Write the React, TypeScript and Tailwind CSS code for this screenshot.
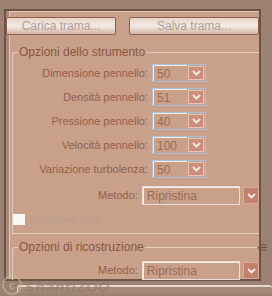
import React from "react";

function Chevron() {
  return (
    <svg width="9" height="6" viewBox="0 0 9 6">
      <path d="M1 1 L4.5 4.5 L8 1" fill="none" stroke="#f6ece6" strokeWidth="1.8" />
    </svg>
  );
}

function Combo({ value, w = "w-[54px]" }: { value: string; w?: string }) {
  return (
    <div className={`flex h-[18px] ${w} border border-[#a9c0d6] bg-[#c9a18b]`}>
      <div className="flex-1 border-l border-t border-[#f4ece7] pl-[3px] leading-[16px] text-[12px] text-[#9c6c56]">{value}</div>
      <div className="m-px flex w-[16px] items-center justify-center border border-[#e8c2b5] bg-[#cd8d7b]">
        <Chevron />
      </div>
    </div>
  );
}

function Row({ label, value }: { label: string; value: string }) {
  return (
    <div className="flex h-[18px] items-center">
      <div className="w-[135px] text-right text-[#93604a]">{label}</div>
      <div className="ml-[4px]">
        <Combo value={value} />
      </div>
    </div>
  );
}

function Metodo() {
  return (
    <div className="flex h-[19px] items-center">
      <div className="w-[135px] text-right text-[#93604a]">Metodo:</div>
      <div className="ml-[4px] flex h-[19px] w-[106px] border border-[#e9ddd5] bg-[#c9a18b]">
        <div className="flex-1 border-l border-t border-[#f6efea] pl-[3px] leading-[17px] text-[12px] text-[#9c6c56]">Ripristina</div>
      </div>
      <div className="ml-[3px] flex h-[17px] w-[16px] shrink-0 items-center justify-center border border-[#d9ab9c] bg-[#c4806e]">
        <Chevron />
      </div>
    </div>
  );
}

function GroupHeader({ title }: { title: string }) {
  return (
    <div className="flex h-[14px] items-center">
      <div className="h-[7px] w-[6px] self-end rounded-tl-[3px] border-l border-t border-[#e4cdbf]" />
      <div className="px-[1px] text-[12px] text-[#8a5640]">{title}</div>
      <div className="h-px flex-1 bg-[#e4cdbf]" />
    </div>
  );
}

export default function App() {
  return (
    <div className="relative h-[296px] w-[272px] overflow-hidden bg-[#9d8273] pl-[4px] pt-[9px] font-['Liberation_Sans',sans-serif] text-[11px]">
      <div className="h-[272px] w-[257px] border-[2px] border-[#6d5346] bg-[#a68b7c] pl-[3px]">
        <div className="h-[268px] border-l border-t border-[#e2c9ba] bg-[#c9a18b]">
          {/* top buttons */}
          <div className="ml-[-4px] mt-[5px] flex h-[18px]">
            <div className="flex w-[134px] items-center justify-center rounded-[2px] border border-[#8a5f4d] bg-gradient-to-b from-[#e8d3c7] via-[#f4ebe5] to-[#d3b4a3] text-[12px] text-[#aca19b]">
              Carica trama...
            </div>
            <div className="ml-[13px] flex w-[130px] shrink-0 items-center justify-center rounded-[2px] border border-[#8a5f4d] bg-gradient-to-b from-[#e8d3c7] via-[#f4ebe5] to-[#d3b4a3] text-[12px] text-[#aca19b]">
              Salva trama...
            </div>
          </div>

          {/* group 1 */}
          <div className="ml-[2px] mt-[10px]">
            <GroupHeader title="Opzioni dello strumento" />
            <div className="flex flex-col border-b border-l border-[#e4cdbf] pb-[8px] pt-[5px]">
              <div className="flex flex-col gap-[6px]">
                <Row label="Dimensione pennello:" value="50" />
                <Row label="Densità pennello:" value="51" />
                <Row label="Pressione pennello:" value="40" />
                <Row label="Velocità pennello:" value="100" />
                <Row label="Variazione turbolenza:" value="50" />
              </div>
              <div className="mt-[8px]">
                <Metodo />
              </div>
              <div className="mt-[9px] flex h-[11px] items-center">
                <div className="h-[11px] w-[12px] bg-[#fbf7f4]" />
                <div className="ml-[4px] text-[#b89e8c]">Pressione stilo</div>
              </div>
            </div>
          </div>

          {/* group 2 */}
          <div className="relative ml-[2px] mt-[6px]">
            <GroupHeader title="Opzioni di ricostruzione" />
            <svg className="absolute right-[-8px] top-[4px]" width="10" height="8" viewBox="0 0 10 8">
              <path d="M0 3 L3 3 L1.5 5 Z" fill="#6b4e40" />
              <path d="M4 1 H10 M4 3.5 H10 M4 6 H10" stroke="#6b4e40" strokeWidth="1" />
            </svg>
            <div className="border-l border-[#e4cdbf] pt-[7px]">
              <Metodo />
            </div>
          </div>
        </div>
      </div>

      {/* bottom strip */}
      <div className="ml-[13px] mt-[4px] h-[8px] rounded-t-[3px] border-l border-t-[2px] border-[#e6d6cc] bg-[#a58a7b]" />

      {/* watermark */}
      <div className="pointer-events-none absolute bottom-[1px] left-[2px] flex items-end opacity-50">
        <div className="flex h-[20px] w-[20px] items-center justify-center rounded-full border-[2px] border-[#c3c895] text-[11px] font-bold leading-none text-[#c3c895]">
          c
        </div>
        <div className="mb-[1px] ml-[3px] font-['DejaVu_Sans',sans-serif] text-[14px] font-bold italic leading-none text-[#8e786c]">
          ShantiZOO
        </div>
      </div>
    </div>
  );
}
